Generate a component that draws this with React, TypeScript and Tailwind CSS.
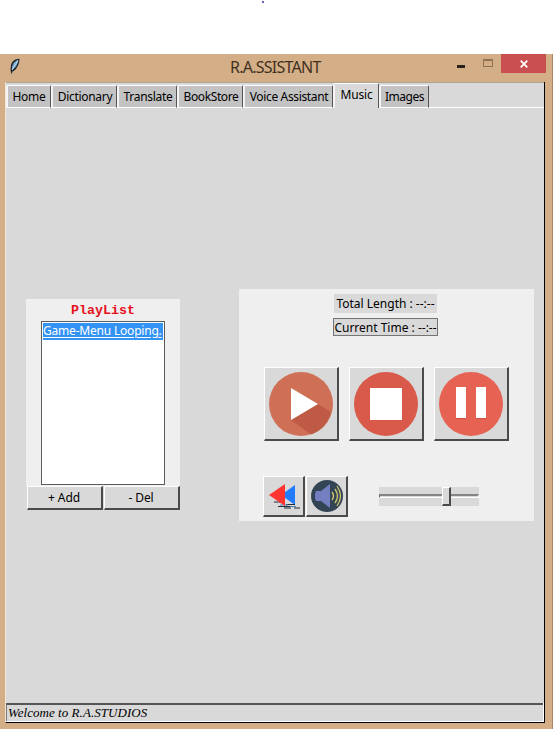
import type { ReactNode } from "react";

const tabs = [
  { label: "Home", box: "w-[45px]", text: "tracking-[-0.25px]" },
  { label: "Dictionary", box: "w-[66px] pl-px", text: "tracking-[-0.3px]" },
  { label: "Translate", box: "w-[60px] pl-px", text: "tracking-[-0.3px]" },
  { label: "BookStore", box: "w-[66px] pl-px", text: "tracking-[-0.4px]" },
  { label: "Voice Assistant", box: "w-[90px] pl-px", text: "tracking-[-0.35px]" },
  { label: "Music", box: "w-[46px]", text: "tracking-[-0.2px]", active: true },
  { label: "Images", box: "w-[50px]", text: "tracking-[-0.45px]" },
];

const raised =
  "flex shrink-0 items-center justify-center bg-[#d9d9d9] border-t border-l border-t-white border-l-white border-r-2 border-b-2 border-r-[#4b4b4b] border-b-[#4b4b4b]";

function Raised({ className, children }: { className: string; children: ReactNode }) {
  return <button className={`${raised} ${className}`}>{children}</button>;
}

function TitleBar() {
  return (
    <header className="flex h-7 shrink-0 items-start">
      <svg className="ml-[9px] mt-[4px] h-[17px] w-[11px] shrink-0" viewBox="0 0 11 17">
        <path d="M10.500 .7C6 .7 3 3.500 2 7L1.500 12L2.600 16.500L3.400 13.500C7.500 12 10.500 6 10.500 .7Z" fill="#17212a" />
        <path d="M9.500 1.700C6 2.500 3.800 5 3 8.500L2.800 11.800C6.500 10.500 9 6 9.500 1.700Z" fill="#6f9fc4" />
        <path d="M8.800 2.500L3 12" stroke="#d7edf7" strokeWidth=".9" />
      </svg>
      <h1 className="ml-[210px] mt-[3px] w-[92px] whitespace-nowrap text-[16px] leading-[21px] tracking-[-0.75px] text-[#42301f]">
        R.A.SSISTANT
      </h1>
      <span className="ml-[135px] mt-[11px] h-[3px] w-2 bg-[#2a2119]" />
      <span className="ml-[18px] mt-[5px] h-2 w-[10px] border border-t-2 border-[#8d7352]" />
      <span className="ml-2 flex h-[19px] w-[45px] items-center justify-center bg-[#c94f50]">
        <svg width="8" height="8" viewBox="0 0 8 8">
          <path d="M.7 .7L7.300 7.300M7.300 .7L.7 7.300" stroke="white" strokeWidth="1.700" />
        </svg>
      </span>
    </header>
  );
}

function TabBar() {
  return (
    <nav className="flex h-[26px] shrink-0 items-end border-t border-[#aaa197] bg-[#d9d9d9]">
      {tabs.map((t) => (
        <div
          key={t.label}
          className={`flex shrink-0 justify-center whitespace-nowrap rounded-t-[2px] border-l-2 border-t border-r border-l-[#f4f4f4] border-t-white border-r-[#555] text-[12px] leading-4 ${t.box} ${t.text} ${
            t.active ? "h-[25px] bg-[#d9d9d9] pt-[3px]" : "h-[23px] border-b border-b-white bg-[#c3c3c3] pt-[3px]"
          }`}
        >
          {t.label}
        </div>
      ))}
      <div className="h-px flex-1 bg-white" />
    </nav>
  );
}

function Playlist() {
  return (
    <section className="mt-[191px] w-[154px] shrink-0">
      <div className="flex h-[187px] flex-col items-center bg-[#efefef]">
        <h2 className="h-[22px] pt-[4px] font-['Liberation_Mono',monospace] text-[13.3px] font-bold leading-[16px] text-[#e6101c]">
          PlayList
        </h2>
        <div className="h-[164px] w-[124px] border border-[#5d5d5d] bg-white p-px">
          <div className="h-[17px] whitespace-nowrap bg-[#3393f5] pt-px text-[12px] leading-[14px] tracking-[-0.2px] text-white underline underline-offset-2">
            Game-Menu Looping.
          </div>
        </div>
      </div>
      <div className="flex gap-px pl-px text-[12px] tracking-[-0.1px]">
        <Raised className="h-6 w-[76px] pr-px">+ Add</Raised>
        <Raised className="h-6 w-[76px] pr-px">- Del</Raised>
      </div>
    </section>
  );
}

function Player() {
  return (
    <section className="ml-[59px] mt-[181px] flex h-[232px] w-[295px] shrink-0 flex-col bg-[#efefef] pt-[5px]">
      <div className="ml-[95px] flex h-[19px] w-[103px] items-center justify-center whitespace-nowrap bg-[#d9d9d9] text-[12px]">
        Total Length : --:--
      </div>
      <div className="ml-[94px] mt-[5px] flex h-[18px] w-[105px] items-center justify-center whitespace-nowrap border border-[#747474] bg-[#d9d9d9] pt-px text-[12px]">
        Current Time : --:--
      </div>
      <div className="ml-[25px] mt-[31px] flex gap-[10px]">
        <Raised className="h-[74px] w-[75px]">
          <svg width="64" height="64" viewBox="0 0 64 64">
            <circle cx="32" cy="32" r="32" fill="#cf7056" />
            <path d="M22 48L49 32L62 40A32 32 0 0 1 42 62.400Z" fill="#bf5b45" />
            <path d="M22 16V48L49 32Z" fill="white" />
          </svg>
        </Raised>
        <Raised className="h-[74px] w-[75px]">
          <svg width="64" height="64" viewBox="0 0 64 64">
            <circle cx="32" cy="32" r="32" fill="#d95a4b" />
            <path d="M16 16H48V48H16Z" fill="white" />
          </svg>
        </Raised>
        <Raised className="h-[74px] w-[75px]">
          <svg width="64" height="64" viewBox="0 0 64 64">
            <circle cx="32" cy="32" r="32" fill="#e66253" />
            <path d="M17 17H27V47H17ZM37 17H47V47H37Z" fill="#ce4f43" />
            <path d="M17 15H27V46H17ZM37 15H47V46H37Z" fill="white" />
          </svg>
        </Raised>
      </div>
      <div className="ml-6 mt-[35px] flex items-start gap-px">
        <Raised className="h-[41px] w-[42px]">
          <svg width="36" height="36" viewBox="0 0 36 36" className="shrink-0">
            <path d="M29 7V27L15 17Z" fill="#237bff" />
            <path d="M8 24H16M12 28.500H24M20 26.500H29M18 30H25M28 30H34" stroke="#222d3b" strokeWidth="1.200" />
            <path d="M14 27H22M24 28.500H30" stroke="#4c83b9" strokeWidth="1" />
            <path d="M19 6V28L3 17Z" fill="#ff3430" />
          </svg>
        </Raised>
        <Raised className="h-[41px] w-[42px]">
          <svg width="34" height="34" viewBox="0 0 34 34">
            <circle cx="17" cy="17" r="16" fill="#334554" />
            <path d="M6 12H11L20 5V29L11 22H6Q4 17 6 12Z" fill="#737fc0" />
            <path d="M22 13Q25 17 22 21M25 10Q30 17 25 24M27 7Q34 17 27 27" fill="none" stroke="#d4c86d" strokeWidth="1.300" />
          </svg>
        </Raised>
        <div className="ml-[30px] mt-[11px] flex h-[19px] w-[100px] items-center bg-[#d9d9d9]">
          <div className="mb-[2px] h-[4px] w-[63px] border-b border-l border-t-2 border-b-white border-l-[#666] border-t-[#858585]" />
          <Raised className="h-[19px] w-[9px]">{null}</Raised>
          <div className="mb-[2px] h-[4px] w-[28px] border-b border-r border-t-2 border-b-white border-r-white border-t-[#858585]" />
        </div>
      </div>
    </section>
  );
}

export default function App() {
  return (
    <div className="flex h-[729px] w-[553px] flex-col overflow-hidden bg-white font-['Noto_Sans','Open_Sans',sans-serif] text-black">
      <div className="flex h-[54px] shrink-0 justify-center">
        <span className="ml-[-27px] mt-px h-[2px] w-[2px] rounded-full bg-[#39319a]" />
      </div>
      <div className="flex h-[675px] flex-col border-r border-[#aa8763] bg-[#d3ae86]">
        <TitleBar />
        <div className="ml-[5px] flex h-[641px] w-[540px] shrink-0 flex-col border-b border-l border-r border-b-black border-l-[#f0e5dc] border-r-black bg-[#d9d9d9]">
          <TabBar />
          <main className="flex h-[595px] shrink-0 pl-5">
            <Playlist />
            <Player />
          </main>
          <div className="h-[19px] shrink-0 border-b border-r border-white">
            <footer className="h-[18px] border-l border-t-2 border-l-[#777] border-t-[#555] pl-px font-['Liberation_Serif',serif] text-[13px] italic leading-[16px] tracking-[0.05px]">
              Welcome to R.A.STUDIOS
            </footer>
          </div>
        </div>
      </div>
    </div>
  );
}
